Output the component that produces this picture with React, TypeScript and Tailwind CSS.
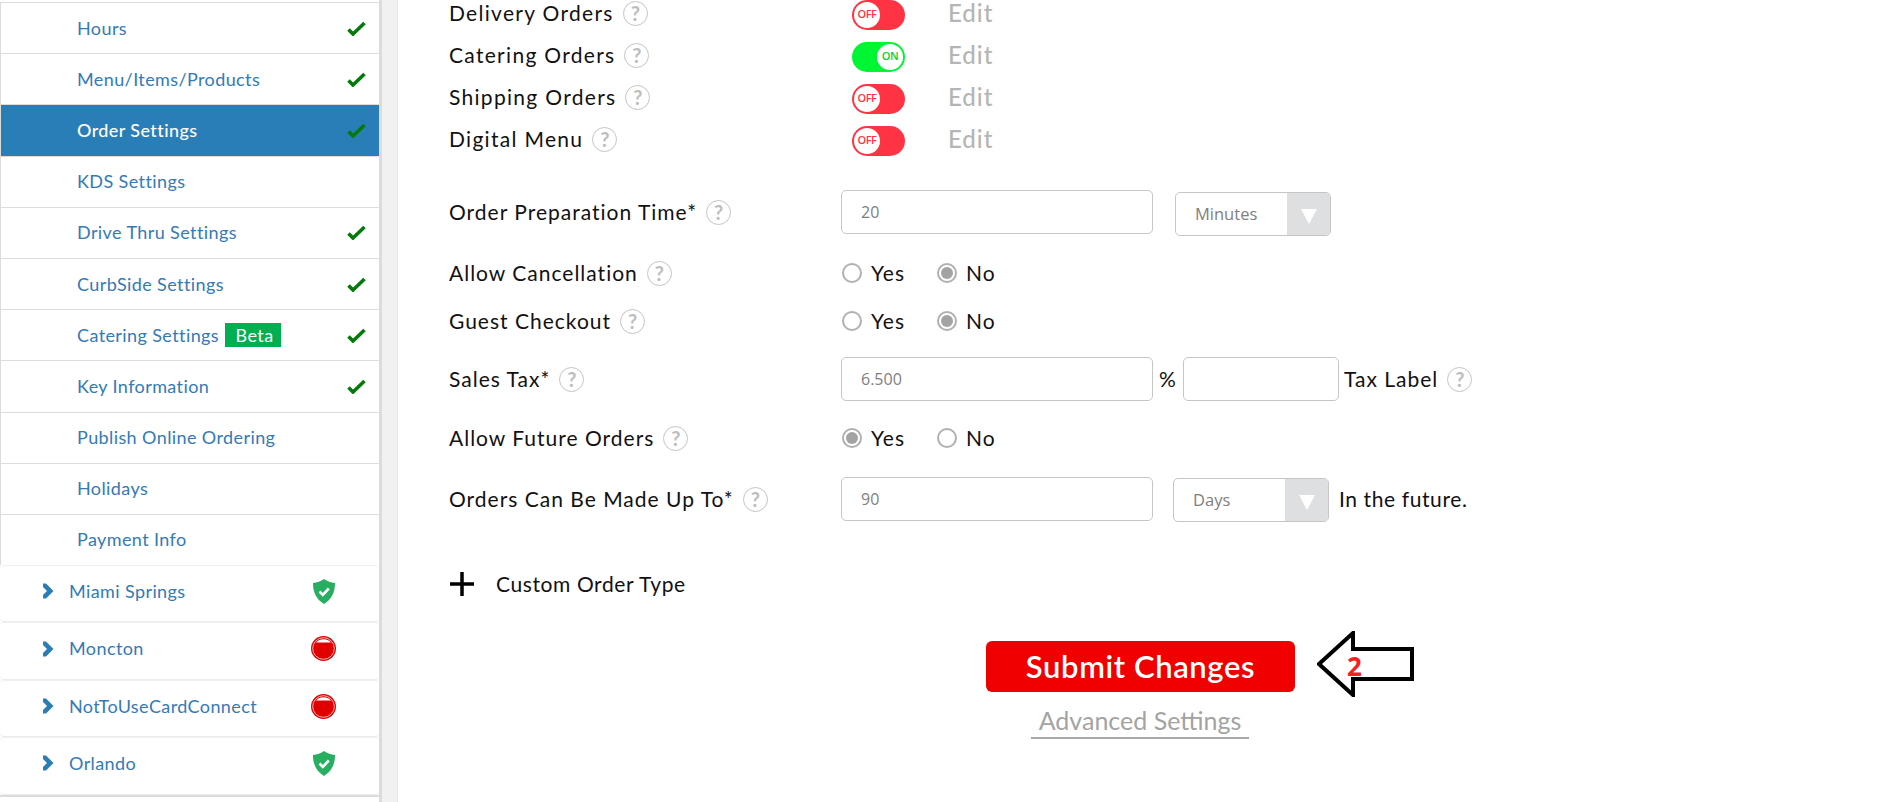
const subItems = [
  { name: "Hours", done: true },
  { name: "Menu/Items/Products", done: true },
  { name: "Order Settings", done: true, active: true },
  { name: "KDS Settings" },
  { name: "Drive Thru Settings", done: true },
  { name: "CurbSide Settings", done: true },
  { name: "Catering Settings", done: true, beta: true },
  { name: "Key Information", done: true },
  { name: "Publish Online Ordering" },
  { name: "Holidays" },
  { name: "Payment Info" },
];

const stores = [
  { name: "Miami Springs", ok: true },
  { name: "Moncton", ok: false },
  { name: "NotToUseCardConnect", ok: false },
  { name: "Orlando", ok: true },
];

function Check() {
  return (
    <svg width="19" height="15" viewBox="0 0 19 15" className="ml-auto shrink-0">
      <path d="M1.5 8.5 L6 13 L17.5 2" fill="none" stroke="#047a0c" strokeWidth="3.6" />
    </svg>
  );
}

function Chevron() {
  return (
    <svg width="12" height="16" viewBox="0 0 12 16" className="shrink-0">
      <path d="M1 0.5 L4 0.5 L11.5 8 L4 15.5 L1 15.5 L1 12 L5 8 L1 4 Z" fill="#2a7eb8" />
    </svg>
  );
}

function ShieldIcon() {
  return (
    <svg width="22" height="25" viewBox="0 0 22 25">
      <path d="M11 0 C14 2.5 18 3.5 22 4 C22 13 19 20 11 25 C3 20 0 13 0 4 C4 3.5 8 2.5 11 0 Z" fill="#27ae60" />
      <path d="M6.5 12.5 L9.8 15.8 L15.8 9.5" fill="none" stroke="#fff" strokeWidth="2.6" />
    </svg>
  );
}

function StopIcon() {
  return (
    <svg width="25" height="25" viewBox="0 0 25 25">
      <circle cx="12.5" cy="12.5" r="12.5" fill="#e00000" />
      <circle cx="12.5" cy="12.5" r="10.8" fill="none" stroke="#fff" strokeWidth="0.7" />
      <path d="M5 6.5 A10.2 10.2 0 0 1 20 6.5 Z" fill="#fff" />
    </svg>
  );
}

function Help() {
  return (
    <span className="ml-[9px] inline-flex h-[25px] w-[25px] shrink-0 items-center justify-center rounded-full border border-[#c4c4c4] text-[20px] font-bold leading-none tracking-normal text-[#bdbdbd]">
      ?
    </span>
  );
}

function Label({ text }: { text: string }) {
  return (
    <div className="flex w-[392px] shrink-0 items-center">
      <span>{text}</span>
      <Help />
    </div>
  );
}

function Toggle({ on }: { on?: boolean }) {
  return (
    <span
      className={
        on
          ? "mt-[3px] flex h-[30px] w-[53px] items-center justify-end rounded-full bg-[#00f532] px-[2px]"
          : "mt-[3px] flex h-[30px] w-[53px] items-center justify-start rounded-full bg-[#ff3344] px-[2px]"
      }
    >
      <span
        className={
          on
            ? "flex h-[26px] w-[26px] items-center justify-center rounded-full bg-white font-['Open_Sans',sans-serif] text-[11px] font-semibold tracking-[-0.4px] text-[#00d62c]"
            : "flex h-[26px] w-[26px] items-center justify-center rounded-full bg-white font-['Open_Sans',sans-serif] text-[11px] font-semibold tracking-[-0.4px] text-[#ff3344]"
        }
      >
        {on ? "ON" : "OFF"}
      </span>
    </span>
  );
}

function ToggleRow({ text, on }: { text: string; on?: boolean }) {
  return (
    <div className="flex h-[42px] items-center">
      <div className="flex w-[403px] shrink-0 items-center">
        <span className="tracking-[1.3px]">{text}</span>
        <Help />
      </div>
      <Toggle on={on} />
      <span className="ml-[43px] mb-[1px] text-[24px] font-medium text-[#b5b5b5]">Edit</span>
    </div>
  );
}

function Radio({ checked }: { checked?: boolean }) {
  return (
    <span className="flex h-[20px] w-[20px] items-center justify-center rounded-full border-2 border-[#b0b0b0] bg-white">
      {checked && <span className="h-[12px] w-[12px] rounded-full bg-[#a3a3a3]" />}
    </span>
  );
}

function YesNo({ text, yes, className }: { text: string; yes?: boolean; className: string }) {
  return (
    <div className={"flex h-[40px] items-center " + className}>
      <Label text={text} />
      <div className="flex w-[96px] items-center gap-[9px] pl-[1px]">
        <Radio checked={yes} />
        <span>Yes</span>
      </div>
      <div className="flex items-center gap-[9px]">
        <Radio checked={!yes} />
        <span>No</span>
      </div>
    </div>
  );
}

function TextBox({ value, width }: { value?: string; width: string }) {
  return (
    <div
      className={
        "flex h-[44px] items-center rounded-[5px] border border-[#c6c6c6] pl-[19px] font-['Open_Sans',sans-serif] text-[16px] tracking-normal text-[#808080] " +
        width
      }
    >
      {value}
    </div>
  );
}

function Select({ text, className }: { text: string; className: string }) {
  return (
    <div className={"flex h-[44px] w-[156px] overflow-hidden rounded-[5px] border border-[#c6c6c6] " + className}>
      <div className="flex flex-1 items-center pl-[19px] font-['Open_Sans',sans-serif] text-[16.5px] tracking-normal text-[#808080]">
        {text}
      </div>
      <div className="flex w-[43px] items-center justify-center bg-[#dedfe1]">
        <span className="mt-[4px] h-0 w-0 border-x-[8px] border-t-[15px] border-x-transparent border-t-white" />
      </div>
    </div>
  );
}

function Arrow() {
  return (
    <svg width="98" height="66" viewBox="0 0 98 66" className="absolute left-[331px] top-[-10px]">
      <path d="M2 33 L36 2 L36 18 L95 18 L95 48 L36 48 L36 64 Z" fill="#fff" stroke="#000" strokeWidth="4" />
    </svg>
  );
}

export default function App() {
  return (
    <div className="flex h-[802px] w-[1887px] overflow-hidden bg-white font-['Lato',sans-serif]">
      {/* left menu */}
      <aside className="w-[382px] shrink-0 border-r-[3px] border-[#dcdcdc] pt-[2px] text-[18px] tracking-[0.4px] text-[#337ab7]">
        <ul className="border-l border-[#dcdcdc]">
          {subItems.map((item) => (
            <li
              key={item.name}
              className={
                item.active
                  ? "flex h-[51.2px] items-center border-t border-[#dcdcdc] bg-[#2a7eb8] pl-[76px] pr-[13px] font-medium text-white"
                  : "flex h-[51.2px] items-center border-t border-[#dcdcdc] pl-[76px] pr-[13px]"
              }
            >
              <span>{item.name}</span>
              {item.beta && (
                <span className="ml-[6px] flex h-[24px] w-[56px] items-center justify-center bg-[#00b050] pl-[3px] text-white">
                  Beta
                </span>
              )}
              {item.done && <Check />}
            </li>
          ))}
        </ul>
        {stores.map((store) => (
          <div
            key={store.name}
            className="flex h-[57.4px] items-center rounded-[4px] border-b border-t border-b-[#ececec] border-t-[#f0f0f0] pb-[5px] pl-[42px] pr-[43px]"
          >
            <Chevron />
            <span className="ml-[15px]">{store.name}</span>
            <span className="ml-auto flex w-[25px] justify-center">
              {store.ok ? <ShieldIcon /> : <StopIcon />}
            </span>
          </div>
        ))}
        <div className="border-t-2 border-[#dcdcdc]" />
      </aside>
      <div className="w-[16px] shrink-0 border-r border-[#e6e6e6] bg-[#f1f1f1]" />

      {/* order settings form */}
      <main className="flex-1 pl-[51px] text-[21px] tracking-[1px] text-[#111]">
        <div className="-mt-[8px]">
          <ToggleRow text="Delivery Orders" />
          <ToggleRow text="Catering Orders" on />
          <ToggleRow text="Shipping Orders" />
          <ToggleRow text="Digital Menu" />
        </div>

        <div className="mt-[28px] flex items-center">
          <Label text="Order Preparation Time*" />
          <TextBox value="20" width="w-[312px]" />
          <Select text="Minutes" className="ml-[22px] mt-[4px]" />
        </div>

        <YesNo text="Allow Cancellation" className="mt-[17px]" />
        <YesNo text="Guest Checkout" className="mt-[8px]" />

        <div className="mt-[16px] flex items-center">
          <Label text="Sales Tax*" />
          <TextBox value="6.500" width="w-[312px]" />
          <span className="w-[30px] pl-[6px]">%</span>
          <TextBox width="w-[156px]" />
          <span className="ml-[5px]">Tax Label</span>
          <Help />
        </div>

        <YesNo text="Allow Future Orders" yes className="mt-[17px]" />

        <div className="mt-[18px] flex items-center">
          <Label text="Orders Can Be Made Up To*" />
          <TextBox value="90" width="w-[312px]" />
          <Select text="Days" className="ml-[20px] mt-[2px]" />
          <span className="ml-[10px] tracking-[0.6px]">In the future.</span>
        </div>

        <div className="mt-[47px] flex h-[30px] items-center">
          <svg width="26" height="26" viewBox="0 0 26 26">
            <path d="M13 1 V25 M1 13 H25" stroke="#000" strokeWidth="3.5" />
          </svg>
          <span className="ml-[21px] tracking-[0.6px]">Custom Order Type</span>
        </div>

        <div className="relative ml-[537px] mt-[42px] w-[309px]">
          <button className="h-[51px] w-full rounded-[6px] bg-[#f00000] text-[31px] font-semibold tracking-[0.6px] text-white">
            Submit Changes
          </button>
          <Arrow />
          <span className="absolute left-[361px] top-[6px] font-['Noto_Sans',sans-serif] text-[26px] font-bold tracking-normal text-[#f22222]">
            2
          </span>
        </div>
        <div className="ml-[582px] mt-[12px] w-[218px] border-b-2 border-[#a8a8a8] text-center text-[25px] leading-[33px] tracking-normal text-[#a3a3a3]">
          Advanced Settings
        </div>
      </main>
    </div>
  );
}
